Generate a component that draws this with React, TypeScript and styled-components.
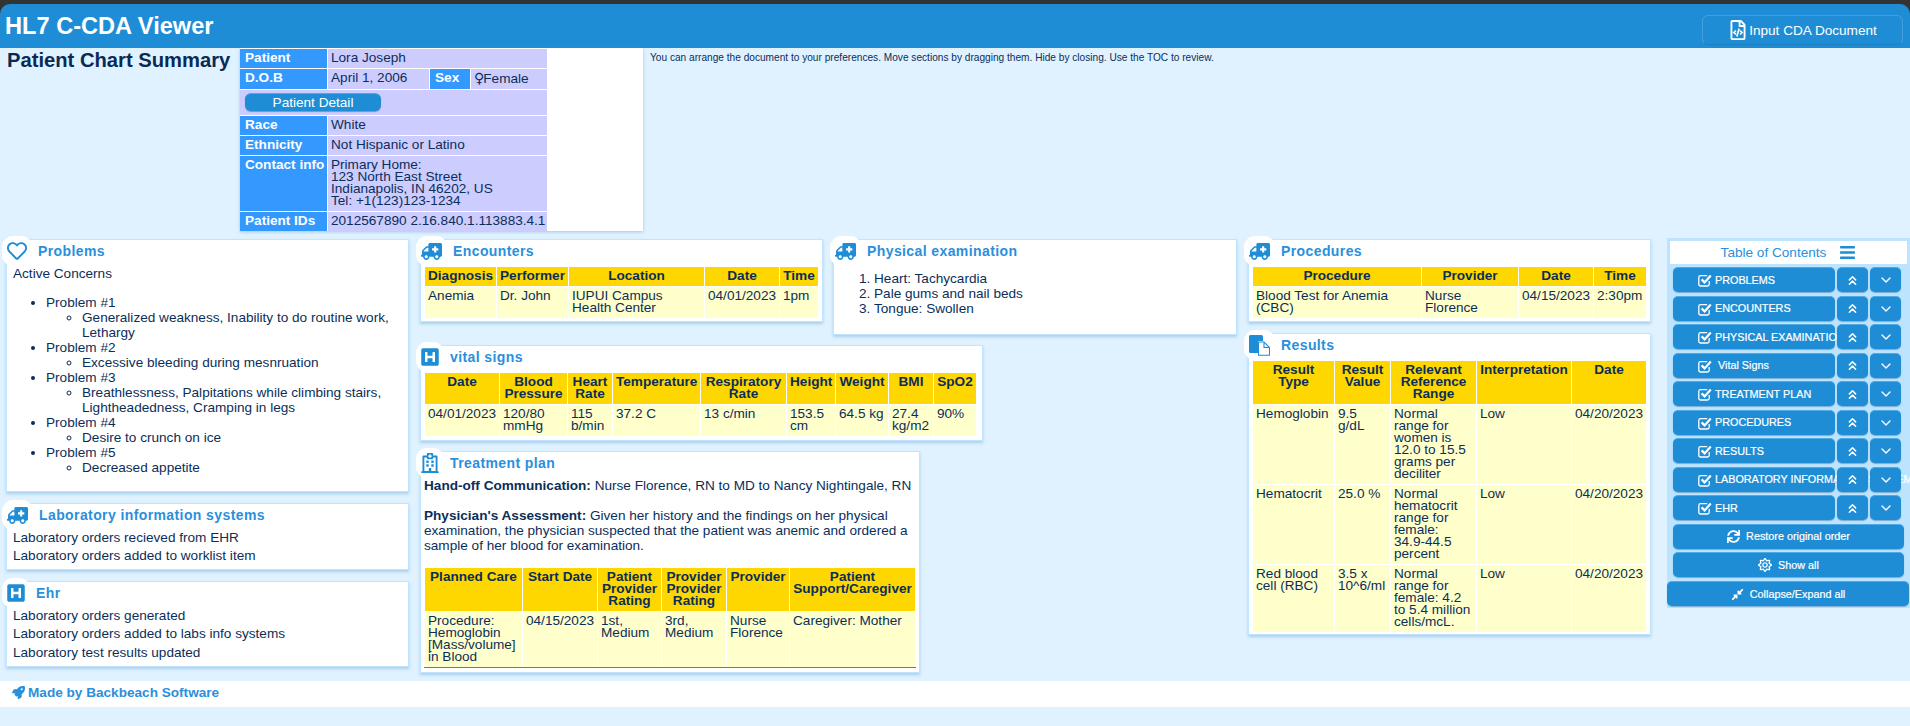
import React from 'react';
import styled, { createGlobalStyle } from 'styled-components';
import { ChevronDown, ChevronsUp } from 'lucide-react';
import {
  FaAmbulance,
  FaBars,
  FaCompressAlt,
  FaHSquare,
  FaRegFileCode,
  FaRegHeart,
  FaRegHospital,
  FaRegSun,
  FaRocket,
  FaSync
} from 'react-icons/fa';

const BLUE = '#1f8dd6';
const INK = '#0b2e59';

const GlobalStyle = createGlobalStyle`
  html, body {
    margin: 0;
    padding: 0;
    background: #e0f2ff;
    color: ${INK};
    font-family: "Liberation Sans", Arial, sans-serif;
    font-size: 13.6px;
    line-height: 15px;
  }
  body { min-height: 726px; overflow: hidden; }
`;

const TopStrip = styled.div`
  background: #333;
  height: 48px;
  padding-top: 4px;
  box-sizing: border-box;
`;

const Header = styled.header`
  height: 44px;
  background: ${BLUE};
  border-radius: 10px 10px 0 0;
  display: flex;
  align-items: center;
  justify-content: space-between;
  padding: 0 7px 0 5px;
`;

const AppTitle = styled.h1`
  margin: 0;
  color: #fff;
  font-size: 23.6px;
  line-height: 28px;
  font-weight: bold;
`;

const InputButton = styled.button`
  width: 201px;
  height: 30px;
  margin-top: 8px;
  display: flex;
  align-items: center;
  justify-content: center;
  gap: 1px;
  padding: 0;
  color: #fff;
  background: transparent;
  border: 1px solid rgba(255, 255, 255, 0.16);
  border-bottom-color: rgba(0, 0, 0, 0.1);
  border-radius: 6px;
  font: 13.6px "Liberation Sans", Arial, sans-serif;
`;

const Summary = styled.section`
  display: flex;
  height: 191px;
  align-items: flex-start;
`;

const SummaryTitle = styled.h2`
  width: 233px;
  margin: 0;
  padding: 1px 0 0 7px;
  font-size: 20.2px;
  line-height: 22px;
  font-weight: bold;
  color: #0a2a55;
`;

const PatientBox = styled.div`
  width: 403px;
  height: 183px;
  background: #fff;
  box-shadow: 0 1px 3px rgba(90, 160, 210, 0.5);
`;

const PatientTable = styled.table`
  width: 309px;
  margin-left: -1px;
  table-layout: fixed;
  border-collapse: separate;
  border-spacing: 1px;
  line-height: 12px;

  th {
    background: #3399ff;
    color: #fff;
    text-align: left;
    vertical-align: top;
    padding: 3px 3px 4px 5px;
    white-space: nowrap;
  }
  td {
    background: #ccccff;
    vertical-align: top;
    padding: 3px 3px 4px;
    white-space: nowrap;
  }
`;

const Venus = styled.span`
  font-family: "DejaVu Sans", sans-serif;
  font-size: 14px;
  letter-spacing: -1px;
`;

const DetailButton = styled.button`
  display: block;
  width: 136px;
  height: 18px;
  margin: 0 0 0 2px;
  padding: 0;
  color: #fff;
  background: ${BLUE};
  border: 0;
  border-top: 1px solid #4fa9e4;
  border-radius: 6px;
  box-shadow: 0 1px 1px rgba(0, 60, 120, 0.4);
  font: 13.6px/16px "Liberation Sans", Arial, sans-serif;
`;

const Hint = styled.p`
  margin: 0;
  padding: 4px 0 0 7px;
  font-size: 10.15px;
  line-height: 12px;
`;

const Board = styled.main`
  display: flex;
  align-items: flex-start;
  padding-left: 6px;
`;

const Column = styled.div<{ $w: number; $gap?: number }>`
  width: ${(p) => p.$w}px;
  flex: none;
  display: flex;
  flex-direction: column;
  align-items: flex-start;
  gap: ${(p) => p.$gap ?? 11}px;
`;

const TopRow = styled.div`
  display: flex;
  align-items: flex-start;
  gap: 10px;
`;

const Card = styled.article<{ $w: number; $h: number; $pad?: number }>`
  box-sizing: border-box;
  width: ${(p) => p.$w}px;
  height: ${(p) => p.$h}px;
  flex: none;
  padding: 0 4px 0 ${(p) => p.$pad ?? 3}px;
  background: #fff;
  border: 1px solid #c2e5ff;
  box-shadow: 0 2px 3px rgba(100, 165, 215, 0.45);
`;

const CardHead = styled.div`
  display: flex;
  align-items: flex-start;
  height: 26px;
`;

const Bubble = styled.span<{ $left: number; $inset: number }>`
  flex: none;
  display: flex;
  align-items: center;
  height: 30px;
  margin: -4px 0 0 ${(p) => p.$left}px;
  padding: 0 ${(p) => p.$inset}px;
  background: #fff;
  border-radius: 11px;
  color: ${BLUE};
  position: relative;
`;

const CardTitle = styled.h3`
  margin: 3px 0 0 6px;
  font-size: 14px;
  line-height: 16px;
  font-weight: bold;
  letter-spacing: 0.4px;
  color: #2a8fdc;
`;

const Line = styled.p<{ $after?: number }>`
  margin: 0 0 ${(p) => p.$after ?? 0}px;
`;

const CardText = styled.div`
  padding-left: 3px;
`;

const BulletList = styled.ul`
  margin: 14px 0 0;
  padding-left: 33px;

  ul {
    margin: 0;
    padding-left: 36px;
  }
`;

const NumberList = styled.ol`
  margin: 5px 0 0;
  padding-left: 40px;
`;

const DataTable = styled.table<{ $ruled?: boolean; $w: number }>`
  width: ${(p) => p.$w}px;
  table-layout: fixed;
  border-collapse: separate;
  border-spacing: ${(p) => (p.$ruled ? '1px 0' : '1px')};
  line-height: 12px;
  ${(p) => (p.$ruled ? 'border-bottom: 1px solid #777; margin-top: 1px;' : '')}

  th {
    background: #ffd700;
    color: ${INK};
    padding: 3px 3px 4px;
    vertical-align: top;
    text-align: center;
    font-weight: bold;
    ${(p) => (p.$ruled ? 'border-bottom: 1px solid #fff;' : '')}
  }
  td {
    background: #ffffcc;
    padding: 3px 3px 4px;
    vertical-align: top;
    text-align: left;
  }
`;

const Col = styled.col<{ $w: number }>`
  width: ${(p) => p.$w}px;
`;

const Toc = styled.aside`
  width: 243px;
  height: 370px;
  margin: -1px 0 0 16px;
  flex: none;
  box-sizing: border-box;
  padding-top: 3px;
  background: #bde4ff;
`;

const TocTitle = styled.div`
  height: 23px;
  margin: 0 3px;
  display: flex;
  align-items: center;
  justify-content: center;
  gap: 13px;
  background: #fff;
  color: #2a8fdc;

  svg { color: ${BLUE}; }
`;

const TocBody = styled.div`
  display: flex;
  flex-direction: column;
  gap: 3.55px;
  margin-top: 3px;
  padding: 0 6px;
`;

const TocRow = styled.div`
  display: flex;
  gap: 2px;
`;

const BlueButton = styled.button<{ $w?: number }>`
  position: relative;
  box-sizing: border-box;
  height: 25px;
  width: ${(p) => (p.$w ? `${p.$w}px` : '100%')};
  flex: none;
  display: flex;
  align-items: center;
  justify-content: center;
  gap: 6px;
  padding: 0;
  color: #fff;
  background: ${BLUE};
  border: 0;
  border-top: 1px solid #4fa9e4;
  border-radius: 5px;
  box-shadow: 0 1px 1px rgba(0, 70, 130, 0.35);
  font: 10.8px/13px "Liberation Sans", Arial, sans-serif;
  white-space: nowrap;
  -webkit-text-stroke: 0.2px #fff;

  svg { flex: none; }
`;

const SectionButton = styled(BlueButton)`
  justify-content: flex-start;
  padding-left: 25px;
  gap: 3px;
`;

const SectionLabel = styled.span<{ $indent: number }>`
  margin-left: ${(p) => p.$indent}px;
`;

const WideButton = styled(BlueButton)`
  width: 242px;
  margin: 0 0 0 -6px;
`;

const Footer = styled.footer`
  box-sizing: border-box;
  height: 26px;
  margin-top: 8px;
  display: flex;
  align-items: center;
  gap: 3px;
  padding: 0 0 4px 12px;
  background: #fff;
  color: #2a8fdc;
  font-weight: bold;
`;

const Ambulance = styled(FaAmbulance).attrs({ size: 21 })`
  transform: scaleX(-1);
`;

const CheckIcon = () => (
  <svg width="14" height="14" viewBox="0 0 14 14" fill="none" stroke="#fff">
    <path d="M11.2 8v3.2a1.8 1.8 0 0 1-1.8 1.8H2.6a1.8 1.8 0 0 1-1.8-1.8V4.4a1.8 1.8 0 0 1 1.8-1.8h6.6" strokeWidth="1.3" />
    <path d="M3.6 6.4l3 3 6.2-7" strokeWidth="2.2" />
  </svg>
);

const PasteIcon = () => (
  <svg width="21" height="21" viewBox="0 0 21 21">
    <path d="M1.5 0h11A1.5 1.5 0 0 1 14 1.5V6H9v12H1.5A1.5 1.5 0 0 1 0 16.5v-15A1.5 1.5 0 0 1 1.5 0z" fill={BLUE} />
    <path d="M9.5 7H15l5.5 5.5v7.7H9.5z" fill="#fff" stroke={BLUE} strokeWidth="1.1" />
    <path d="M15 7.2v5.3h5.3" fill="none" stroke={BLUE} strokeWidth="1.1" />
  </svg>
);

const Head = ({ icon, left = -8, inset = 5, title }: { icon: React.ReactNode; left?: number; inset?: number; title: string }) => (
  <CardHead>
    <Bubble $left={left} $inset={inset}>{icon}</Bubble>
    <CardTitle>{title}</CardTitle>
  </CardHead>
);

const Table = ({ widths, head, rows, ruled }: { widths: number[]; head: string[]; rows: string[][]; ruled?: boolean }) => (
  <DataTable $ruled={ruled} $w={widths.reduce((a, b) => a + b, 0) + widths.length + 1}>
    <colgroup>
      {widths.map((w, i) => <Col key={i} $w={w} />)}
    </colgroup>
    <thead>
      <tr>{head.map((h, i) => <th key={i}>{h}</th>)}</tr>
    </thead>
    <tbody>
      {rows.map((r, i) => (
        <tr key={i}>{r.map((c, j) => <td key={j}>{c}</td>)}</tr>
      ))}
    </tbody>
  </DataTable>
);

const sections = [
  { label: 'PROBLEMS', indent: 0 },
  { label: 'ENCOUNTERS', indent: 0 },
  { label: 'PHYSICAL EXAMINATION', indent: 0 },
  { label: 'Vital Signs', indent: 3 },
  { label: 'TREATMENT PLAN', indent: 0 },
  { label: 'PROCEDURES', indent: 0 },
  { label: 'RESULTS', indent: 0 },
  { label: 'LABORATORY INFORMATION SYSTEMS', indent: 0 },
  { label: 'EHR', indent: 0 }
];

const problems = [
  ['Problem #1', 'Generalized weakness, Inability to do routine work, Lethargy'],
  ['Problem #2', 'Excessive bleeding during mesnruation'],
  ['Problem #3', 'Breathlessness, Palpitations while climbing stairs, Lightheadedness, Cramping in legs'],
  ['Problem #4', 'Desire to crunch on ice'],
  ['Problem #5', 'Decreased appetite']
];

const App = () => {
  return (
    <>
      <GlobalStyle />
      <TopStrip>
        <Header>
          <AppTitle>HL7 C-CDA Viewer</AppTitle>
          <InputButton><FaRegFileCode size={20} />Input CDA Document</InputButton>
        </Header>
      </TopStrip>

      <Summary>
        <SummaryTitle>Patient Chart Summary</SummaryTitle>
        <PatientBox>
          <PatientTable>
            <colgroup>
              <Col $w={87} />
              <Col $w={101} />
              <Col $w={40} />
              <Col $w={76} />
            </colgroup>
            <tbody>
              <tr><th>Patient</th><td colSpan={3}>Lora Joseph</td></tr>
              <tr><th>D.O.B</th><td>April 1, 2006</td><th>Sex</th><td><Venus>♀</Venus>Female</td></tr>
              <tr><td colSpan={4}><DetailButton>Patient Detail</DetailButton></td></tr>
              <tr><th>Race</th><td colSpan={3}>White</td></tr>
              <tr><th>Ethnicity</th><td colSpan={3}>Not Hispanic or Latino</td></tr>
              <tr>
                <th>Contact info</th>
                <td colSpan={3}>Primary Home:<br />123 North East Street<br />Indianapolis, IN 46202, US<br />Tel: +1(123)123-1234</td>
              </tr>
              <tr><th>Patient IDs</th><td colSpan={3}>2012567890 2.16.840.1.113883.4.1</td></tr>
            </tbody>
          </PatientTable>
        </PatientBox>
        <Hint>You can arrange the document to your preferences. Move sections by dragging them. Hide by closing. Use the TOC to review.</Hint>
      </Summary>

      <Board>
        <Column $w={414}>
          <Card $w={403} $h={253}>
            <Head icon={<FaRegHeart size={20} />} title="Problems" />
            <CardText>
              <Line>Active Concerns</Line>
              <BulletList>
                {problems.map(([name, detail]) => (
                  <li key={name}>
                    {name}
                    <ul><li>{detail}</li></ul>
                  </li>
                ))}
              </BulletList>
            </CardText>
          </Card>
          <Card $w={403} $h={67}>
            <Head icon={<Ambulance />} title="Laboratory information systems" />
            <CardText>
              <Line $after={3}>Laboratory orders recieved from EHR</Line>
              <Line>Laboratory orders added to worklist item</Line>
            </CardText>
          </Card>
          <Card $w={403} $h={86}>
            <Head icon={<FaHSquare size={20} />} inset={4} title="Ehr" />
            <CardText>
              <Line $after={3}>Laboratory orders generated</Line>
              <Line $after={4}>Laboratory orders added to labs info systems</Line>
              <Line>Laboratory test results updated</Line>
            </CardText>
          </Card>
        </Column>

        <Column $w={828} $gap={10}>
          <TopRow>
            <Card $w={403} $h={83}>
              <Head icon={<Ambulance />} title="Encounters" />
              <Table
                widths={[71, 71, 135, 74, 38]}
                head={['Diagnosis', 'Performer', 'Location', 'Date', 'Time']}
                rows={[['Anemia', 'Dr. John', 'IUPUI Campus Health Center', '04/01/2023', '1pm']]}
              />
            </Card>
            <Card $w={404} $h={96} $pad={0}>
              <Head icon={<Ambulance />} left={-4} title="Physical examination" />
              <NumberList>
                <li>Heart: Tachycardia</li>
                <li>Pale gums and nail beds</li>
                <li>Tongue: Swollen</li>
              </NumberList>
            </Card>
          </TopRow>
          <Card $w={563} $h={96}>
            <Head icon={<FaHSquare size={20} />} inset={4} title="vital signs" />
            <Table
              widths={[74, 67, 44, 87, 85, 48, 52, 44, 42]}
              head={['Date', 'Blood Pressure', 'Heart Rate', 'Temperature', 'Respiratory Rate', 'Height', 'Weight', 'BMI', 'SpO2']}
              rows={[['04/01/2023', '120/80 mmHg', '115 b/min', '37.2 C', '13 c/min', '153.5 cm', '64.5 kg', '27.4 kg/m2', '90%']]}
            />
          </Card>
          <Card $w={500} $h={222}>
            <Head icon={<FaRegHospital size={20} />} inset={4} title="Treatment plan" />
            <Line $after={15}><b>Hand-off Communication:</b> Nurse Florence, RN to MD to Nancy Nightingale, RN</Line>
            <Line $after={15}><b>Physician's Assessment:</b> Given her history and the findings on her physical examination, the physician suspected that the patient was anemic and ordered a sample of her blood for examination.</Line>
            <Table
              ruled
              widths={[97, 74, 63, 64, 62, 125]}
              head={['Planned Care', 'Start Date', 'Patient Provider Rating', 'Provider Provider Rating', 'Provider', 'Patient Support/Caregiver']}
              rows={[['Procedure: Hemoglobin [Mass/volume] in Blood', '04/15/2023', '1st, Medium', '3rd, Medium', 'Nurse Florence', 'Caregiver: Mother']]}
            />
          </Card>
        </Column>

        <Column $w={403}>
          <Card $w={403} $h={83}>
            <Head icon={<Ambulance />} title="Procedures" />
            <Table
              widths={[168, 96, 74, 52]}
              head={['Procedure', 'Provider', 'Date', 'Time']}
              rows={[['Blood Test for Anemia (CBC)', 'Nurse Florence', '04/15/2023', '2:30pm']]}
            />
          </Card>
          <Card $w={403} $h={302}>
            <Head icon={<PasteIcon />} title="Results" />
            <Table
              widths={[81, 55, 85, 94, 74]}
              head={['Result Type', 'Result Value', 'Relevant Reference Range', 'Interpretation', 'Date']}
              rows={[
                ['Hemoglobin', '9.5 g/dL', 'Normal range for women is 12.0 to 15.5 grams per deciliter', 'Low', '04/20/2023'],
                ['Hematocrit', '25.0 %', 'Normal hematocrit range for female: 34.9-44.5 percent', 'Low', '04/20/2023'],
                ['Red blood cell (RBC)', '3.5 x 10^6/ml', 'Normal range for female: 4.2 to 5.4 million cells/mcL.', 'Low', '04/20/2023']
              ]}
            />
          </Card>
        </Column>

        <Toc>
          <TocTitle>Table of Contents <FaBars size={17} /></TocTitle>
          <TocBody>
            {sections.map((s) => (
              <TocRow key={s.label}>
                <SectionButton $w={162}>
                  <CheckIcon />
                  <SectionLabel $indent={s.indent}>{s.label}</SectionLabel>
                </SectionButton>
                <BlueButton $w={31}><ChevronsUp size={15} strokeWidth={2.4} /></BlueButton>
                <BlueButton $w={31}><ChevronDown size={16} strokeWidth={2} /></BlueButton>
              </TocRow>
            ))}
            <BlueButton><FaSync size={13} />Restore original order</BlueButton>
            <BlueButton><FaRegSun size={14} />Show all</BlueButton>
            <WideButton><FaCompressAlt size={13} />Collapse/Expand all</WideButton>
          </TocBody>
        </Toc>
      </Board>

      <Footer><FaRocket size={13} />Made by Backbeach Software</Footer>
    </>
  );
};

export default App;
